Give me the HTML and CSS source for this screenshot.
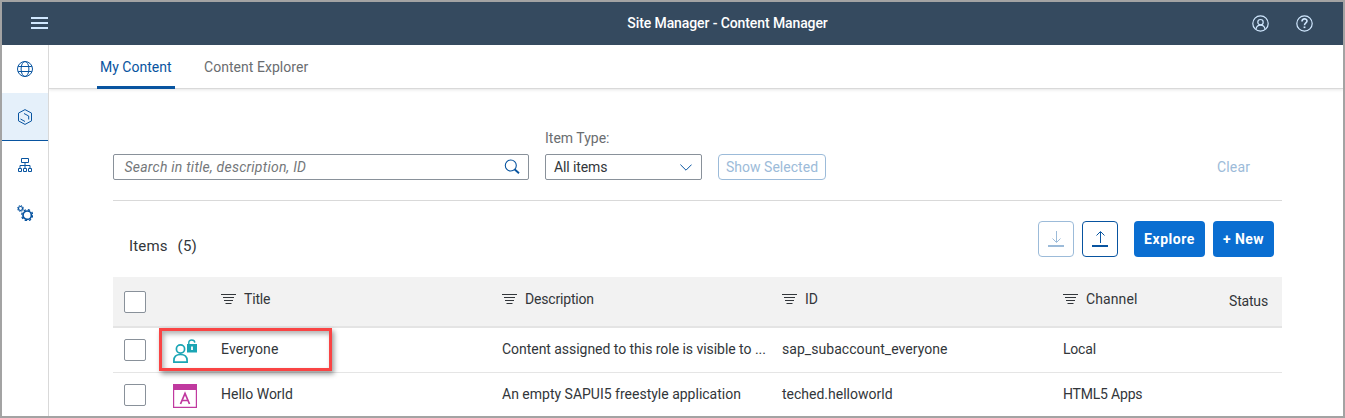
FILE: index.html
```html
<!DOCTYPE html>
<html lang="en">
<head>
<meta charset="utf-8">
<title>Site Manager - Content Manager</title>
<link rel="stylesheet" href="styles.css">
</head>
<body>
<svg class="defs" aria-hidden="true">
  <symbol id="filter" viewBox="0 0 15 12"><path d="M0 1.500h15M2 4.500h11M3 7.500h9M4.500 10.500h6" fill="none" stroke="currentColor" stroke-width="1.200"/></symbol>
</svg>
<div class="app">
  <header class="shell">
    <svg class="menu" viewBox="0 0 17 13"><path d="M0 1h17M0 6h17M0 11h17" stroke="currentColor" stroke-width="2"/></svg>
    <h1 class="shell-title">Site Manager - Content Manager</h1>
    <svg class="shell-icon" viewBox="0 0 17 17" fill="none" stroke="currentColor" stroke-width="1.200"><circle cx="8.500" cy="8.500" r="7.700"/><circle cx="8.500" cy="7.200" r="2.700"/><path d="M4 14.300c.3-2.900 2-4.200 4.500-4.200s4.200 1.300 4.500 4.200"/></svg>
    <svg class="shell-icon" viewBox="0 0 17 17" fill="none" stroke="currentColor" stroke-width="1.200"><circle cx="8.500" cy="8.500" r="7.700"/><path d="M6 6.400c0-3.300 5-3.300 5-.3 0 1.900-2.500 1.900-2.500 4.200" stroke-width="1.600"/><path d="M8.500 11.500v1.600" stroke-width="1.800"/></svg>
  </header>
  <div class="body">
    <nav class="side">
      <a class="side-item"><svg viewBox="0 0 16 16" fill="none" stroke="currentColor"><circle cx="8" cy="8" r="7.500"/><ellipse cx="8" cy="8" rx="3.900" ry="7.500"/><path d="M1.200 5.500h13.600M1.200 10.500h13.600"/></svg></a>
      <a class="side-item selected"><svg viewBox="0 0 16 16" fill="none" stroke="currentColor"><path d="M8 .6l6.500 3.500v7.800L8 15.400l-6.500-3.500V4.100zM7 4.500l4.700 2.500v3.500M3.500 10l4.500 2.500"/></svg></a>
      <a class="side-item"><svg viewBox="0 0 16 16" fill="none" stroke="currentColor"><path d="M4.500 1.500h7v4h-7zM8 5.500v6M3 11V8.500h10V11M1.500 11.500h3v3h-3zM6.500 11.500h3v3h-3zM11.500 11.500h3v3h-3z"/></svg></a>
      <a class="side-item"><svg viewBox="0 0 16 16" fill="none" stroke="currentColor"><circle cx="3.500" cy="3.500" r="2" stroke-width="1.200"/><circle cx="3.500" cy="3.500" r="3" stroke-dasharray="1.200 1.156"/><circle cx="10.200" cy="10.200" r="4.200" stroke-width="1.700"/><circle cx="10.200" cy="10.200" r="5.500" stroke-width="1.300" stroke-dasharray="2.300 2.020"/></svg></a>
    </nav>
    <main class="main">
      <div class="tabs"><a class="tab active">My Content</a><a class="tab explorer">Content Explorer</a></div>
      <section class="content">
        <div class="filters">
          <div class="search"><span>Search in title, description, ID</span><svg viewBox="0 0 16 16" fill="none" stroke="currentColor"><circle cx="6.800" cy="6.500" r="5.500" stroke-width="1.100"/><path d="M10.500 10.200l4.500 4" stroke-width="1.900"/></svg></div>
          <div class="field"><label class="label">Item Type:</label><div class="select"><span>All items</span><svg viewBox="0 0 12 7" fill="none" stroke="currentColor"><path d="M.4.6L6 6.200 11.600.6"/></svg></div></div>
          <button class="ghost">Show Selected</button>
          <a class="clear">Clear</a>
        </div>
        <div class="toolbar">
          <h2 class="count"><span>Items</span><span class="number">(5)</span></h2>
          <button class="icon-btn off"><svg viewBox="0 0 16 17" fill="none" stroke="currentColor"><path d="M8.500 0v11M4.500 7.500l4 4 4-4"/><path d="M0 15h16" stroke-width="2"/></svg></button>
          <button class="icon-btn"><svg viewBox="0 0 16 17" fill="none" stroke="currentColor"><path d="M8.500 12V1M4.500 4.500l4-4 4 4"/><path d="M0 15h16" stroke-width="2"/></svg></button>
          <button class="primary explore">Explore</button>
          <button class="primary new">+ New</button>
        </div>
        <div class="table">
          <div class="row head">
            <i class="check"></i><span></span>
            <div class="th tight"><svg><use href="#filter"/></svg><span>Title</span></div>
            <div class="th tight"><svg><use href="#filter"/></svg><span>Description</span></div>
            <div class="th"><svg><use href="#filter"/></svg><span>ID</span></div>
            <div class="th channel"><svg><use href="#filter"/></svg><span>Channel</span></div>
            <div class="status tight">Status</div>
          </div>
          <div class="row">
            <i class="check"></i>
            <svg class="type role" viewBox="0 0 24 24" fill="none" stroke="currentColor" stroke-width="1.700"><circle cx="7.500" cy="10" r="4.100"/><path d="M.9 23.100v-1.600c0-4.200 2.800-6 6.600-6s6.600 1.800 6.600 6v1.600z"/><path d="M15.800 5V3.500c0-3.300 5.800-3.300 6 .1" stroke-width="1.400"/><path d="M14 5h10v8.500H14z" fill="currentColor" stroke="none"/><path d="M19 7.500v3.500" stroke="#fff" stroke-width="1.800"/></svg>
            <span class="cell everyone">Everyone</span>
            <span class="cell visible">Content assigned to this role is visible to ...</span>
            <span class="cell subaccount">sap_subaccount_everyone</span>
            <span class="cell local">Local</span>
            <span></span>
            <div class="callout"></div>
          </div>
          <div class="row">
            <i class="check"></i>
            <svg class="type appicon" viewBox="0 0 24 24" fill="none" stroke="currentColor"><path d="M.6.600h22.800v22.800H.6z" stroke-width="1.200"/><path d="M0 0h24v6H0z" fill="currentColor" stroke="none"/><path d="M7.500 20L12 9.500 16.500 20M9 16.500h6" stroke-width="1.700"/></svg>
            <span class="cell">Hello World</span>
            <span class="cell">An empty SAPUI5 freestyle application</span>
            <span class="cell">teched.helloworld</span>
            <span class="cell local">HTML5 Apps</span>
            <span></span>
          </div>
        </div>
      </section>
    </main>
  </div>
</div>
</body>
</html>
```
FILE: styles.css
```css
* { box-sizing: border-box; }
body { margin: 0; font: 14px/20px Roboto, sans-serif; color: #32363a; background: #a3a3a3; }
h1, h2 { margin: 0; font-weight: 400; }
button { padding: 0; margin: 0; font: inherit; background: #fff; }
span { white-space: nowrap; }
svg { display: block; flex: none; }
.defs { display: none; }
.app { width: 1345px; height: 418px; padding: 2px; overflow: hidden; display: flex; flex-direction: column; background: #a3a3a3; }

.shell { height: 43px; flex: none; background: #354a5f; color: #d1e8ff; display: flex; align-items: center; padding: 0 30px 0 29px; gap: 27px; }
.menu { width: 17px; height: 13px; }
.shell-title { flex: 1; text-align: center; color: #fff; font-size: 14px; line-height: 20px; font-weight: 500; letter-spacing: -.1px; padding: 0 0 2px 155px; }
.shell-icon { width: 17px; height: 17px; }

.body { flex: 1; min-height: 0; display: flex; background: #fff; }
.side { width: 47px; flex: none; border-right: 1px solid #d9d9d9; }
.side-item { height: 48px; display: flex; align-items: center; justify-content: center; color: #0854a0; }
.side-item.selected { background: #e5f0fa; border-bottom: 1px solid #0854a0; }
.side-item svg { width: 16px; height: 16px; }

.main { flex: 1; min-width: 0; overflow: hidden; }
.tabs { height: 44px; border-bottom: 1px solid #d9d9d9; box-shadow: 0 1px 3px rgba(0,0,0,.1); display: flex; padding-left: 48px; gap: 26px; }
.tab { height: 44px; padding: 12px 3px 0; color: #6a6d70; }
.tab.active { width: 78px; color: #0854a0; border-bottom: 3px solid #0854a0; border-radius: 2px 2px 0 0; }
.explorer { letter-spacing: .04px; }

.content { width: 1233px; padding: 40px 0 0 64px; }
.filters { height: 72px; border-bottom: 1px solid #d9d9d9; display: flex; align-items: flex-end; padding-bottom: 20px; }
.search, .select { height: 26px; border: 1px solid #89919a; border-radius: 2px; display: flex; align-items: center; justify-content: space-between; }
.search { width: 416px; margin-right: 16px; padding: 0 8px 0 10.500px; font-style: italic; letter-spacing: .23px; color: #74777a; }
.search svg { width: 16px; height: 16px; color: #0854a0; }
.field { width: 157px; margin-right: 16px; }
.label { display: block; color: #6a6d70; margin-bottom: 6px; }
.select { padding: 0 9px 0 8px; letter-spacing: -.12px; }
.select svg { width: 12px; height: 7px; color: #0854a0; }
.ghost { width: 108px; height: 26px; border: 1px solid #9cbbd9; border-radius: 4px; color: #9cbbd9; letter-spacing: .03px; }
.clear { margin-left: auto; width: 65px; color: #9cbbd9; letter-spacing: .15px; padding-bottom: 3px; }

.toolbar { height: 76px; display: flex; align-items: center; padding: 0 8px 0 16px; }
.count { flex: 1; font-size: 15px; line-height: 20px; letter-spacing: .15px; display: flex; gap: 10px; padding-top: 13px; }
.icon-btn { width: 36px; height: 36px; margin-right: 8px; border: 1px solid #0854a0; border-radius: 4px; color: #0854a0; display: flex; align-items: center; justify-content: center; }
.icon-btn.off { border-color: #9cbbd9; color: #9cbbd9; }
.icon-btn svg { width: 16px; height: 17px; }
.primary { height: 36px; border: 0; border-radius: 4px; background: #0a6ed1; color: #fff; font-weight: 700; }
.explore { width: 71px; margin: 0 8px; letter-spacing: .55px; }
.new { width: 61px; letter-spacing: .45px; }

.row { position: relative; height: 45px; display: grid; grid-template-columns: 49px 48px 281px 280px 281px 166px 1fr; align-items: center; padding-left: 11px; border-bottom: 1px solid #e5e5e5; }
.row.head { height: 51px; background: #f2f2f2; border-bottom: 2px solid #e4e4e4; }
.check { width: 22px; height: 22px; border: 1px solid #89919a; border-radius: 2px; background: #fff; }
.cell { padding-bottom: 2px; }
.th { display: flex; align-items: center; gap: 8px; padding-bottom: 5px; }
.th svg { width: 15px; height: 12px; }
.status { padding-bottom: 1px; }
.tight { letter-spacing: -.18px; }
.channel { letter-spacing: .1px; }
.everyone { letter-spacing: .14px; }
.visible { letter-spacing: -.04px; }
.subaccount { letter-spacing: .05px; }
.local { letter-spacing: -.2px; }
.type { width: 24px; height: 24px; margin-top: 2px; }
.role { color: #1aa5b4; }
.appicon { color: #c0399f; }
.callout { position: absolute; left: 46px; top: 0; width: 173px; height: 43px; border: 3px solid #f94444; box-shadow: 2px 3px 5px rgba(0,0,0,.4), inset 2px 3px 5px rgba(0,0,0,.3); }
```
